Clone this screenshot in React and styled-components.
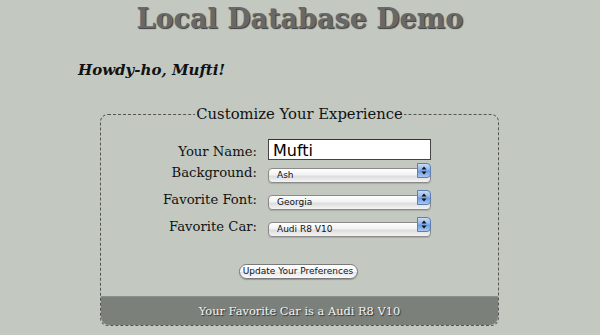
import React, { useState } from 'react';
import styled, { createGlobalStyle } from 'styled-components';

const GlobalStyle = createGlobalStyle`
  html, body {
    margin: 0;
    padding: 0;
    background: #c3c9c1;
  }
  body {
    font-family: "DejaVu Serif", Georgia, serif;
    color: #111;
  }
`;

const Page = styled.div`
  width: 600px;
  height: 335px;
  overflow: hidden;
`;

const Title = styled.h1`
  margin: 0;
  padding-top: 2px;
  height: 38px;
  text-align: center;
  font-family: "DejaVu Serif", Georgia, serif;
  font-weight: bold;
  font-size: 27px;
  line-height: 34px;
  color: #686868;
  text-shadow: 1px 1px 1px #3c3c3c;
`;

const Greeting = styled.h2`
  margin: 19px 0 0 78px;
  font-family: "DejaVu Serif", Georgia, serif;
  font-style: italic;
  font-weight: bold;
  font-size: 15px;
  line-height: 22px;
  color: #111;
`;

const Fieldset = styled.fieldset`
  box-sizing: border-box;
  width: 399px;
  margin: 24px 0 0 100px;
  padding: 0;
  border: 1px dashed #555;
  border-radius: 8px;
  overflow: hidden;
`;

const Legend = styled.legend`
  margin: 0 auto;
  padding: 0 1px;
  font-family: "DejaVu Serif", Georgia, serif;
  font-size: 14.8px;
  line-height: 18px;
  color: #111;
`;

const Form = styled.div`
  display: grid;
  grid-template-columns: 156px 163px;
  column-gap: 11px;
  padding: 19px 0 0 0;
  align-items: center;
`;

const Label = styled.label`
  box-sizing: border-box;
  text-align: right;
  font-family: "DejaVu Serif", Georgia, serif;
  font-size: 13.2px;
  height: ${(p) => p.$h}px;
  padding-top: 2px;
  line-height: ${(p) => p.$h}px;
  white-space: nowrap;
  color: #111;
`;

const Cell = styled.div`
  height: ${(p) => p.$h}px;
  display: flex;
  align-items: center;
`;

const TextInput = styled.input`
  box-sizing: border-box;
  width: 163px;
  height: 21px;
  flex-shrink: 0;
  margin: 0;
  padding: 1px 4px 0;
  border: 1px solid #444;
  border-top-color: #333;
  background: #fff;
  font-family: "DejaVu Sans", "Lucida Grande", sans-serif;
  font-size: 16px;
  color: #000;
  outline: none;
`;

const SelectWrap = styled.div`
  position: relative;
  width: 163px;
  height: 15px;
`;

const Select = styled.select`
  box-sizing: border-box;
  width: 100%;
  height: 15px;
  margin: 0;
  padding: 0 20px 0 8px;
  appearance: none;
  -webkit-appearance: none;
  border: 1px solid #8a8a8a;
  border-radius: 4px;
  background: linear-gradient(#ffffff 0%, #f2f2f2 45%, #dcdcdc 55%, #f4f4f4 100%);
  font-family: "DejaVu Sans", "Lucida Grande", sans-serif;
  font-size: 9px;
  line-height: 13px;
  color: #111;
  box-shadow: 0 1px 1px rgba(0, 0, 0, 0.15);
  outline: none;
`;

const Arrows = styled.span`
  position: absolute;
  top: 0;
  right: 0;
  width: 14px;
  height: 15px;
  box-sizing: border-box;
  border: 1px solid #5c7fb3;
  border-radius: 0 4px 4px 0;
  background: linear-gradient(#c9dcf5 0%, #8fb4ea 45%, #6d9be0 55%, #a9c8f2 100%);
  pointer-events: none;
  display: flex;
  align-items: center;
  justify-content: center;
`;

const ButtonRow = styled.div`
  display: flex;
  justify-content: center;
  padding: 26px 0 17px 0;
`;

const Button = styled.button`
  box-sizing: border-box;
  width: 119px;
  height: 15px;
  margin-left: -3px;
  padding: 0;
  border: 1px solid #7a7a7a;
  border-radius: 8px;
  background: linear-gradient(#ffffff 0%, #f6f6f6 50%, #e4e4e4 51%, #fafafa 100%);
  font-family: "DejaVu Sans", "Lucida Grande", sans-serif;
  font-size: 9px;
  line-height: 13px;
  color: #111;
  box-shadow: 0 1px 1px rgba(0, 0, 0, 0.25);
  cursor: pointer;
`;

const Footer = styled.div`
  height: 28px;
  background: #7b807b;
  border-top: 1px solid #8c918c;
  text-align: center;
  font-family: "DejaVu Serif", Georgia, serif;
  font-size: 11.4px;
  line-height: 28px;
  color: #f4f4f4;
  text-shadow: 1px 1px 1px #2e2e2e;
`;

const ArrowIcon = () => (
  <svg width="6" height="9" viewBox="0 0 6 9">
    <path d="M3 0.5 L5.5 3.5 H0.5 Z" fill="#111" />
    <path d="M3 8.5 L5.5 5.5 H0.5 Z" fill="#111" />
  </svg>
);

const Dropdown = ({ value, options, onChange }) => (
  <SelectWrap>
    <Select value={value} onChange={(e) => onChange(e.target.value)}>
      {options.map((o) => (
        <option key={o} value={o}>{o}</option>
      ))}
    </Select>
    <Arrows>
      <ArrowIcon />
    </Arrows>
  </SelectWrap>
);

const App = () => {
  const [name, setName] = useState('Mufti');
  const [bg, setBg] = useState('Ash');
  const [font, setFont] = useState('Georgia');
  const [car, setCar] = useState('Audi R8 V10');

  return (
    <Page>
      <GlobalStyle />
      <Title>Local Database Demo</Title>
      <Greeting>Howdy-ho, {name}!</Greeting>
      <Fieldset>
        <Legend>Customize Your Experience</Legend>
        <Form>
          <Label $h={15}>Your Name:</Label>
          <Cell $h={15}>
            <TextInput value={name} onChange={(e) => setName(e.target.value)} />
          </Cell>
          <Label $h={27}>Background:</Label>
          <Cell $h={27}>
            <Dropdown value={bg} onChange={setBg} options={['Ash', 'Sand', 'Slate']} />
          </Cell>
          <Label $h={27}>Favorite Font:</Label>
          <Cell $h={27}>
            <Dropdown value={font} onChange={setFont} options={['Georgia', 'Helvetica', 'Times']} />
          </Cell>
          <Label $h={27}>Favorite Car:</Label>
          <Cell $h={27}>
            <Dropdown value={car} onChange={setCar} options={['Audi R8 V10', 'Porsche 911', 'BMW M3']} />
          </Cell>
        </Form>
        <ButtonRow>
          <Button type="button">Update Your Preferences</Button>
        </ButtonRow>
        <Footer>Your Favorite Car is a {car}</Footer>
      </Fieldset>
    </Page>
  );
};

export default App;
